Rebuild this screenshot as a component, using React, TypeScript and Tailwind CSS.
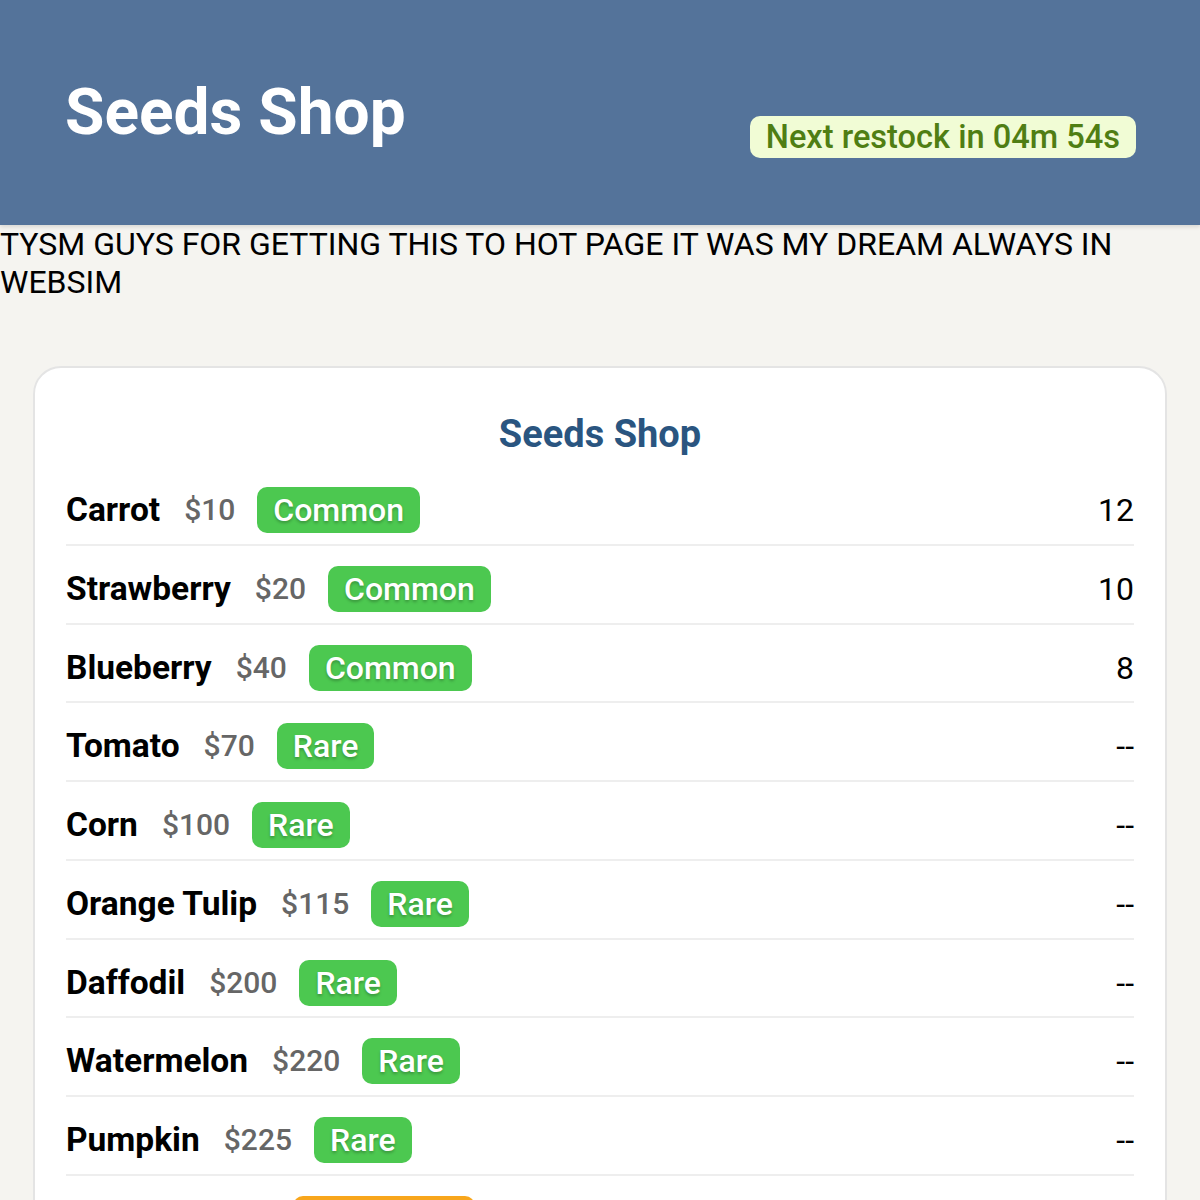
import * as React from "react";

type Seed = {
  name: string;
  price: number;
  rarity: "Common" | "Rare" | "Legendary";
  stock: number | null;
};

const seeds: Seed[] = [
  { name: "Carrot", price: 10, rarity: "Common", stock: 12 },
  { name: "Strawberry", price: 20, rarity: "Common", stock: 10 },
  { name: "Blueberry", price: 40, rarity: "Common", stock: 8 },
  { name: "Tomato", price: 70, rarity: "Rare", stock: null },
  { name: "Corn", price: 100, rarity: "Rare", stock: null },
  { name: "Orange Tulip", price: 115, rarity: "Rare", stock: null },
  { name: "Daffodil", price: 200, rarity: "Rare", stock: null },
  { name: "Watermelon", price: 220, rarity: "Rare", stock: null },
  { name: "Pumpkin", price: 225, rarity: "Rare", stock: null },
  { name: "Banana", price: 250, rarity: "Legendary", stock: null },
];

function RarityBadge({ rarity }: { rarity: Seed["rarity"] }) {
  const color = rarity === "Legendary" ? "bg-[#f8a61c]" : "bg-[#4cc850]";
  return (
    <span
      className={`${color} ml-[22px] rounded-[10px] px-[16px] h-[46px] flex items-center text-[32px] leading-none font-medium text-white [text-shadow:0_2px_3px_rgba(0,0,0,0.25)]`}
    >
      {rarity}
    </span>
  );
}

export default function App() {
  return (
    <div className="min-h-screen bg-[#f5f4f0] text-black font-['Roboto',sans-serif]">
      <header className="h-[225px] bg-[#54739a] flex items-center justify-between pl-[65px] pr-[64px] shadow-[0_2px_4px_rgba(0,0,0,0.12)]">
        <h1 className="text-[64px] font-bold text-white leading-none">Seeds Shop</h1>
        <div className="mt-[49px] h-[42px] flex items-center rounded-[10px] bg-[#f1fcd5] px-[16px] text-[32.6px] leading-none font-medium text-[#4f7e13]">
          Next restock in 04m 54s
        </div>
      </header>

      <p className="text-[32px] leading-[38px]">
        TYSM GUYS FOR GETTING THIS TO HOT PAGE IT WAS MY DREAM ALWAYS IN WEBSIM
      </p>

      <div className="mx-[33px] mt-[65px] rounded-[28px] border-2 border-[#e4e4e4] bg-white px-[31px] pt-[42px]">
        <h2 className="text-center text-[38px] leading-[48px] font-bold text-[#2a5580] mb-[9px]">
          Seeds Shop
        </h2>
        <div>
          {seeds.map((s) => (
            <div
              key={s.name}
              className="flex items-center justify-between border-b-2 border-[#eeeeee] pt-[20px] pb-[10.75px]"
            >
              <div className="flex items-center">
                <span className="text-[33.5px] leading-[38px] font-bold">{s.name}</span>
                <span className="ml-[24px] text-[30px] leading-[38px] font-medium text-[#666666]">${s.price}</span>
                <RarityBadge rarity={s.rarity} />
              </div>
              <span className="text-[32px] leading-[38px]">{s.stock ?? "--"}</span>
            </div>
          ))}
        </div>
      </div>
    </div>
  );
}
